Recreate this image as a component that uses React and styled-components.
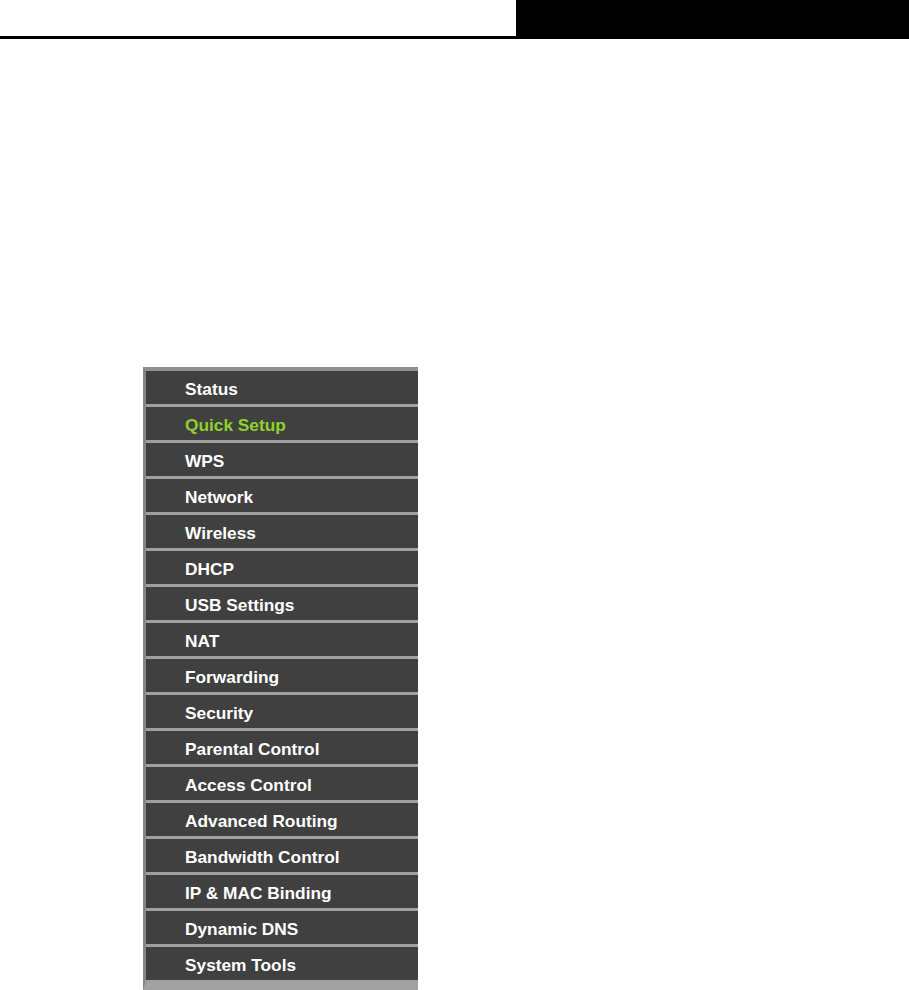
import React from 'react';
import styled, { createGlobalStyle } from 'styled-components';

const items = [
  'Status',
  'Quick Setup',
  'WPS',
  'Network',
  'Wireless',
  'DHCP',
  'USB Settings',
  'NAT',
  'Forwarding',
  'Security',
  'Parental Control',
  'Access Control',
  'Advanced Routing',
  'Bandwidth Control',
  'IP & MAC Binding',
  'Dynamic DNS',
  'System Tools',
];

const Global = createGlobalStyle`
  html, body {
    margin: 0;
    padding: 0;
    background: #fff;
  }
  body {
    font-family: "Liberation Sans", Arial, sans-serif;
    overflow: hidden;
  }
`;

const Page = styled.div`
  width: 909px;
  height: 990px;
  display: flex;
  flex-direction: column;
  overflow: hidden;
`;

const Header = styled.header`
  display: flex;
  height: 37px;
  border-bottom: 3px solid #000;
`;

const HeaderBlank = styled.div`
  flex: 1;
`;

const HeaderBlock = styled.div`
  width: 393px;
  background: #000;
`;

const Menu = styled.nav`
  width: 272px;
  margin: 328px 0 0 143px;
  border-left: 3px solid #86867c;
  border-top: 4px solid #909090;
  border-bottom: 10px solid #a2a2a2;
  background: #404040;
`;

const MenuItem = styled.div`
  box-sizing: border-box;
  height: 33px;
  display: flex;
  align-items: center;
  padding: 3px 0 0 39px;
  font-size: 17.3px;
  font-weight: bold;
  letter-spacing: 0;
  color: ${(p) => (p.$active ? '#8fd02c' : '#ffffff')};
  background: #404040;

  & + & {
    box-sizing: content-box;
    height: 30px;
    border-top: 3px solid #a0a0a0;
  }
`;

export default function App() {
  return (
    <Page>
      <Global />
      <Header>
        <HeaderBlank />
        <HeaderBlock />
      </Header>
      <Menu>
        {items.map((item) => (
          <MenuItem key={item} $active={item === 'Quick Setup'}>
            {item}
          </MenuItem>
        ))}
      </Menu>
    </Page>
  );
}
